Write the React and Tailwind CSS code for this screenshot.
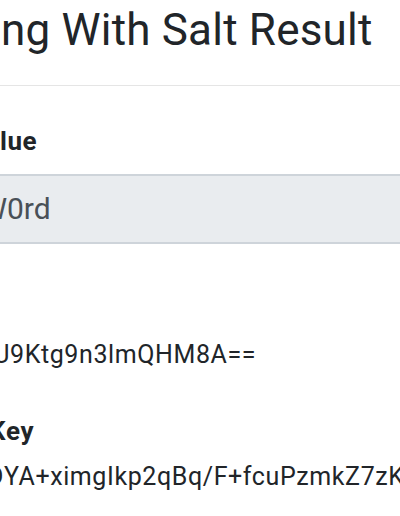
function Cut({ lead, hidden, children }) {
  // hidden part is right-aligned so the visible part starts at a fixed x
  return (
    <div className="flex whitespace-nowrap">
      <span className="shrink-0 text-right" style={{ width: lead }}>
        {hidden}
      </span>
      <span>{children}</span>
    </div>
  );
}

export default function App() {
  return (
    <div className="w-[400px] h-[516px] overflow-hidden bg-white text-[#212529] font-['Roboto',sans-serif]">
      <div className="-ml-[240px] w-[760px]">
        {/* Page title */}
        <div className="pt-[2px] text-[44px] leading-[56px] tracking-[0.2px]">
          <Cut lead={241} hidden="Hashi">
            ng With Salt Result
          </Cut>
        </div>
        <hr className="mt-[27px] border-0 border-t border-[#e5e5e5]" />

        {/* Value */}
        <div className="mt-[37px] text-[26px] leading-[36px] font-bold tracking-[0.5px]">
          <Cut lead={240} hidden="Plain Text Va">
            lue
          </Cut>
        </div>
        <div className="mt-[15px] h-[70px] rounded-md border-2 border-[#ced4da] bg-[#e9ecef] text-[30px] leading-[66px] text-[#495057]">
          <Cut lead={245} hidden="P@ssW">
            0rd
          </Cut>
        </div>

        {/* Salt */}
        <div className="mt-[48px] text-[26px] leading-[36px] font-bold">
          <Cut lead={232} hidden="Salt" />
        </div>
        <div className="mt-[9px] text-[25px] leading-[36px] tracking-[0.6px]">
          <Cut lead={250} hidden="Kq3xR7pLmU">
            9Ktg9n3lmQHM8A==
          </Cut>
        </div>

        {/* Key */}
        <div className="mt-[40px] text-[26px] leading-[36px] font-bold tracking-[0.5px]">
          <Cut lead={246} hidden="Hashed K">
            ey
          </Cut>
        </div>
        <div className="mt-[10px] text-[25px] leading-[36px] tracking-[0.6px]">
          <Cut lead={244} hidden="Wm5sbDRhD">
            YA+ximgIkp2qBq/F+fcuPzmkZ7zKcR4Ws8LQ=
          </Cut>
        </div>
      </div>
    </div>
  );
}
